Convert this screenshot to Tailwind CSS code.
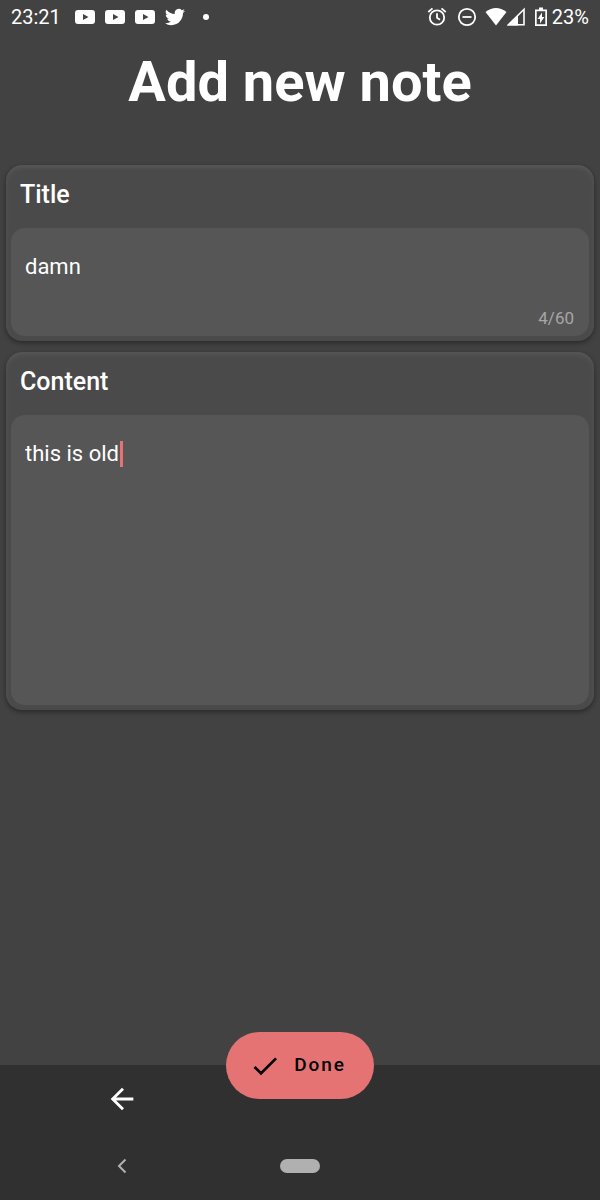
<!DOCTYPE html>
<html lang="en">
<head>
  <meta charset="UTF-8" />
  <meta name="viewport" content="width=device-width, initial-scale=1.0" />
  <title>Add new note</title>
  <script src="https://cdn.jsdelivr.net/npm/@tailwindcss/browser@4"></script>
</head>
<body class="bg-[#424242] font-[Roboto,sans-serif] text-white min-h-screen flex flex-col">

  <!-- status bar -->
  <header class="h-[34px] px-[11px] flex items-center justify-between text-xl">
    <div class="flex items-center">
      <span class="mr-[14px]">23:21</span>
      <div class="flex items-center gap-[10px]">
        <svg class="w-5 h-4" viewBox="0 0 20 16" fill="currentColor"><path fill-rule="evenodd" d="M3 1h14q3 0 3 3v8q0 3-3 3H3q-3 0-3-3V4q0-3 3-3zM8 5v6l5.500-3z"/></svg>
        <svg class="w-5 h-4" viewBox="0 0 20 16" fill="currentColor"><path fill-rule="evenodd" d="M3 1h14q3 0 3 3v8q0 3-3 3H3q-3 0-3-3V4q0-3 3-3zM8 5v6l5.500-3z"/></svg>
        <svg class="w-5 h-4" viewBox="0 0 20 16" fill="currentColor"><path fill-rule="evenodd" d="M3 1h14q3 0 3 3v8q0 3-3 3H3q-3 0-3-3V4q0-3 3-3zM8 5v6l5.500-3z"/></svg>
        <svg class="w-5 h-5" viewBox="0 0 24 24" fill="currentColor"><path d="M23.95 4.57a10 10 0 0 1-2.82.77 4.96 4.96 0 0 0 2.16-2.72c-.95.55-2 .95-3.13 1.18a4.92 4.92 0 0 0-8.38 4.48C7.69 8.1 4.07 6.13 1.64 3.16a4.92 4.92 0 0 0 1.52 6.57 4.9 4.9 0 0 1-2.23-.61v.06c0 2.39 1.7 4.38 3.95 4.83a5 5 0 0 1-2.21.08 4.94 4.94 0 0 0 4.6 3.42A9.87 9.87 0 0 1 0 19.54a13.99 13.99 0 0 0 7.55 2.21c9.05 0 14-7.5 14-13.98 0-.21 0-.42-.02-.63a9.94 9.94 0 0 0 2.46-2.55z"/></svg>
      </div>
      <span class="ml-[18px] size-[6px] rounded-full bg-white"></span>
    </div>
    <div class="flex items-center">
      <svg class="size-5 mr-[10px]" viewBox="0 0 20 20" fill="none" stroke="currentColor" stroke-width="1.8"><circle cx="10" cy="10.500" r="7.200"/><path d="M10 6.300v4.500l3 1.900M1.300 5l4.200-3.600M18.700 5l-4.200-3.600"/></svg>
      <svg class="size-5 mr-2" viewBox="0 0 20 20" fill="none" stroke="currentColor" stroke-width="1.8"><circle cx="10" cy="10" r="8.200"/><path d="M5.500 10h9"/></svg>
      <svg class="w-[22px] h-5" viewBox="0 0 22 20" fill="currentColor"><path d="M.5 5Q11-3 21.500 5L11 18.500z"/></svg>
      <svg class="w-[18px] h-5 mr-[10px]" viewBox="0 0 18 20"><path d="M1.500 17.700L17 2.300v15.400z" fill="none" stroke="currentColor" stroke-width="1.600"/><path d="M0 18.500L11 8v10.500z" fill="currentColor"/></svg>
      <svg class="w-3 h-5 mr-[5px]" viewBox="0 0 12 20" fill="currentColor"><path fill-rule="evenodd" d="M4 .500h4v2h4v16.500H0V2.500h4zM1.700 4.300v13h8.600v-13z"/><path d="M7 5.500v4.500h2.400L5 16.500V12H2.600z"/></svg>
      <span>23%</span>
    </div>
  </header>

  <h1 class="mt-[13px] text-center text-[56px] leading-[70px] font-bold">Add new note</h1>

  <!-- note form -->
  <form id="noteForm" class="mt-12 px-[6px] flex flex-col gap-[11px]">
    <section class="rounded-2xl bg-[#4a4a4a] p-[5px] shadow-[0_2px_5px_rgba(0,0,0,0.4),inset_0_3px_5px_rgba(255,255,255,0.07)]">
      <label for="title" class="block pl-[9px] pt-[5px] h-[58px] text-[25px] leading-10 font-medium">Title</label>
      <div class="h-[108px] rounded-[14px] bg-[#565656] px-[14px] pt-[22px] pb-1 flex flex-col justify-between">
        <input id="title" type="text" maxlength="60" value="damn" class="w-full bg-transparent text-[22px] leading-[34px] outline-none" />
        <span id="counter" class="pr-px text-right text-[17px] leading-7 text-[#a6a6a6]">4/60</span>
      </div>
    </section>

    <section class="rounded-2xl bg-[#4a4a4a] p-[5px] shadow-[0_2px_5px_rgba(0,0,0,0.4),inset_0_3px_5px_rgba(255,255,255,0.07)]">
      <label for="content" class="block pl-[9px] pt-[5px] h-[58px] text-[25px] leading-10 font-medium">Content</label>
      <div class="relative h-[290px] rounded-[14px] bg-[#565656] px-[14px] pt-[22px]">
        <textarea id="content" class="block w-full h-[256px] resize-none bg-transparent text-[22px] leading-[34px] outline-none caret-[#e57373]">this is old</textarea>
        <!-- cursor -->
        <span class="absolute left-[109px] top-[26px] w-[3px] h-[26px] bg-[#e57373]"></span>
      </div>
    </section>
  </form>

  <!-- bottom bar with the docked button -->
  <footer class="relative mt-auto h-[135px] bg-[#303030]">
    <button type="submit" form="noteForm" class="absolute left-1/2 -top-[33px] -translate-x-1/2 h-[67px] w-[148px] rounded-full bg-[#e57373] text-black flex items-center justify-center gap-[13px] pr-[5px] text-[19px] font-medium tracking-widest">
      <svg class="size-8" viewBox="0 0 24 24" fill="currentColor"><path d="M9 16.170L4.830 12l-1.420 1.410L9 19 21 7l-1.410-1.410z"/></svg>
      Done
    </button>
    <div class="grid grid-cols-5 justify-items-center">
      <button type="button" aria-label="Back" class="col-start-1 col-span-2 mt-[17px] ml-1">
        <svg class="size-[34px]" viewBox="0 0 24 24" fill="currentColor"><path d="M20 11H7.830l5.590-5.590L12 4l-8 8 8 8 1.410-1.410L7.830 13H20z"/></svg>
      </button>
    </div>
    <!-- system navigation -->
    <nav class="mt-[42px] grid grid-cols-5 items-center justify-items-center text-[#b0b0b0]">
      <button type="button" aria-label="System back" class="col-span-2 ml-1">
        <svg class="size-4" viewBox="0 0 16 16" fill="none" stroke="currentColor" stroke-width="2"><path d="M11.500 1.500L5 8l6.500 6.500"/></svg>
      </button>
      <button type="button" aria-label="Home" class="h-[14px] w-10 rounded-full bg-[#b0b0b0]"></button>
    </nav>
  </footer>

<script>
  const title = document.getElementById("title");
  const counter = document.getElementById("counter");

  // update the character counter
  title.addEventListener("input", () => {
    counter.textContent = title.value.length + "/60";
  });

  document.getElementById("noteForm").addEventListener("submit", (e) => e.preventDefault());
</script>
</body>
</html>
